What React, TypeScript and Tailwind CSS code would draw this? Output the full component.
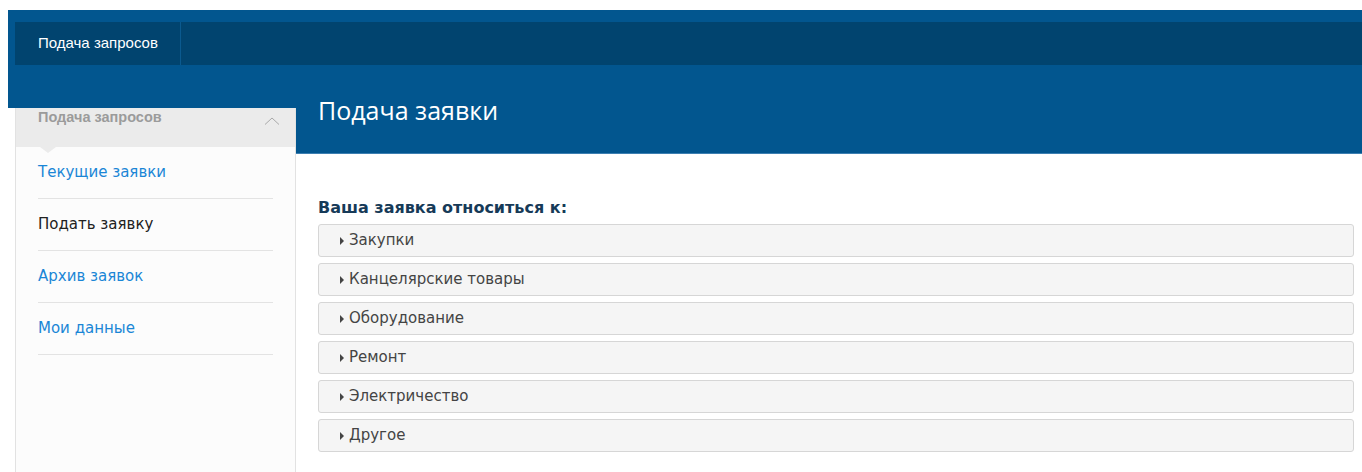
import React from 'react';

const sideLinks = [
  { label: 'Текущие заявки', active: false },
  { label: 'Подать заявку', active: true },
  { label: 'Архив заявок', active: false },
  { label: 'Мои данные', active: false },
];

const categories = ['Закупки', 'Канцелярские товары', 'Оборудование', 'Ремонт', 'Электричество', 'Другое'];

const verdana = "font-['DejaVu_Sans',Verdana,sans-serif]";

const ChevronUp: React.FC = () => (
  <svg width="16" height="8" viewBox="0 0 16 8" fill="none" stroke="#a8a8a8" strokeWidth="1" className="mt-[9px]">
    <path d="M1 7.5 L8 1 L15 7.5" />
  </svg>
);

const CategoryRow: React.FC<{ label: string }> = ({ label }) => (
  <div className="h-[33px] flex items-center pl-[21px] bg-[#f5f5f5] border border-[#d6d6d6] rounded-[3px] text-[15px] text-[#444]">
    <span className="w-0 h-0 border-y-[4px] border-y-transparent border-l-[4px] border-l-[#444] mr-[5px]" />
    {label}
  </div>
);

export default function App() {
  return (
    <div className={`min-h-[472px] bg-white pt-[10px] pl-2 ${verdana}`}>
      {/* top bar */}
      <header className="bg-[#02568f] pt-3 pl-[7px]">
        <nav className="h-[43px] bg-[#01446f] flex">
          <a className="h-full flex items-center pl-[23px] pr-[22px] border-r border-[#0b5a8f] text-white text-[15px] font-['Liberation_Sans',Arial,sans-serif]">
            Подача запросов
          </a>
        </nav>
      </header>

      <div className="flex">
        {/* left column */}
        <div className="w-[288px] shrink-0 flex flex-col">
          <div className="h-[43px] bg-[#02568f]" />
          <aside className="ml-[7px] flex-1 bg-[#fcfcfc] border-x border-[#e2e2e2] min-h-[364px]">
            <div className="relative h-[39px] bg-[#ebebeb] flex items-start justify-between pl-[22px] pr-[15px] text-[14.5px] leading-[16px] font-bold text-[#9b9b9b] font-['Liberation_Sans',Arial,sans-serif]">
              <span className="pt-[1px]">Подача запросов</span>
              <ChevronUp />
              <span className="absolute left-[24px] top-full w-0 h-0 border-x-[8px] border-x-transparent border-t-[6px] border-t-[#ebebeb]" />
            </div>
            <ul className="mx-[22px] text-[15px]">
              {sideLinks.map((link) => (
                <li
                  key={link.label}
                  className={`h-[52px] flex items-center border-b border-[#e3e3e3] ${link.active ? 'text-[#222]' : 'text-[#1a86d6]'}`}
                >
                  {link.label}
                </li>
              ))}
            </ul>
          </aside>
        </div>

        {/* main column */}
        <main className="flex-1">
          <div className="h-[89px] bg-[#02568f] border-b border-[#3d7fb1] pl-[22px] pt-[30px]">
            <h1 className="text-[25px] leading-[30px] text-white font-['Open_Sans',sans-serif]">Подача заявки</h1>
          </div>
          <div className="pl-[22px] pr-2 pt-[44px]">
            <h2 className="text-[16px] font-bold text-[#163a58] leading-[20px] mb-[6px]">Ваша заявка относиться к:</h2>
            <div className="flex flex-col gap-[6px]">
              {categories.map((c) => (
                <CategoryRow key={c} label={c} />
              ))}
            </div>
          </div>
        </main>
      </div>
    </div>
  );
}
